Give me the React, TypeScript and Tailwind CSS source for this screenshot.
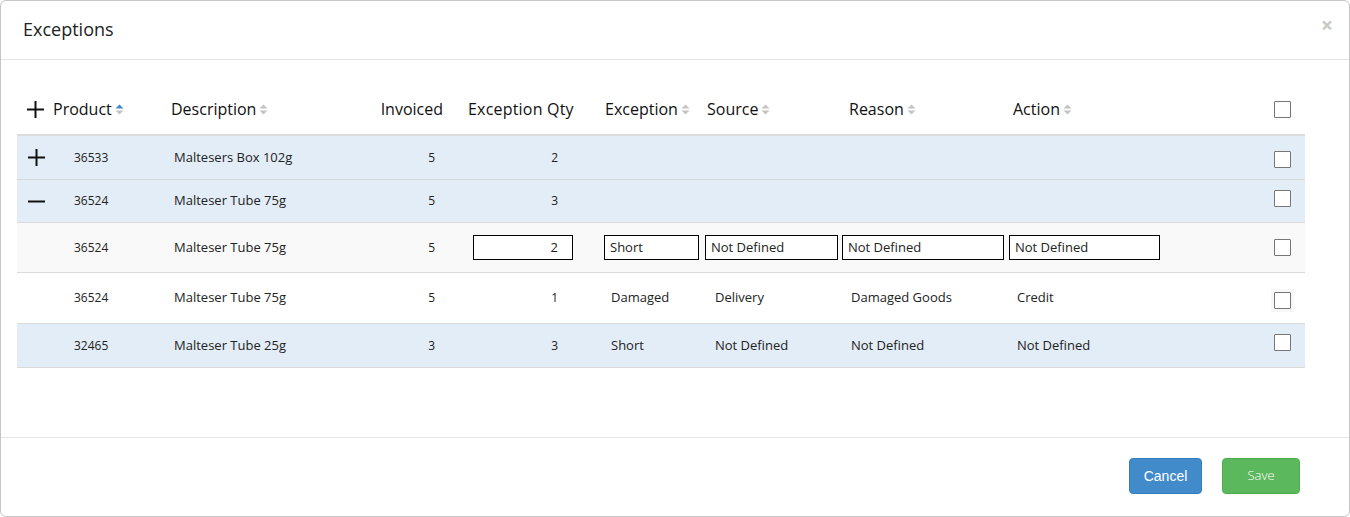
import React from "react";

const font = { fontFamily: '"Open Sans", "Noto Sans", sans-serif' };

function Sort({ active }: { active?: boolean }) {
  return (
    <svg width="9" height="11" viewBox="0 0 9 11" className="ml-[3px] inline-block">
      <path d="M0.5 4.5 L4.5 0.5 L8.5 4.5 Z" fill={active ? "#428bca" : "#c4c4c4"} />
      <path d="M0.5 6.5 L4.5 10.5 L8.5 6.5 Z" fill="#c4c4c4" />
    </svg>
  );
}

function Plus() {
  return (
    <svg width="19" height="19" viewBox="0 0 19 19">
      <path d="M9.5 1 V18 M1 9.5 H18" stroke="#111" strokeWidth="2" />
    </svg>
  );
}
function Minus() {
  return (
    <svg width="19" height="19" viewBox="0 0 19 19">
      <path d="M1 9.5 H18" stroke="#111" strokeWidth="2" />
    </svg>
  );
}

function Check({ shade }: { shade?: boolean }) {
  return (
    <div className={shade ? "w-fit p-[3px] -m-[3px] bg-[#f7f7f7]" : "w-fit"}>
      <div className="w-[17px] h-[17px] border border-[#767676] bg-white rounded-[1px]" />
    </div>
  );
}

type Row = {
  icon?: "plus" | "minus";
  bg: string;
  h: string;
  cb: string;
  prod: string;
  desc: string;
  inv: string;
  qty: string;
  exc?: string;
  src?: string;
  rea?: string;
  act?: string;
  edit?: boolean;
  shade?: boolean;
};

const rows: Row[] = [
  { icon: "plus", bg: "bg-[#e3edf7]", h: "h-[44px]", cb: "translate-y-[2px]", prod: "36533", desc: "Maltesers Box 102g", inv: "5", qty: "2" },
  { icon: "minus", bg: "bg-[#e3edf7]", h: "h-[43px]", cb: "-translate-y-[3px]", prod: "36524", desc: "Malteser Tube 75g", inv: "5", qty: "3" },
  { bg: "bg-[#f9f9f9]", h: "h-[50px]", cb: "", prod: "36524", desc: "Malteser Tube 75g", inv: "5", qty: "2", exc: "Short", src: "Not Defined", rea: "Not Defined", act: "Not Defined", edit: true },
  { bg: "bg-white", h: "h-[51px]", cb: "translate-y-[2px]", prod: "36524", desc: "Malteser Tube 75g", inv: "5", qty: "1", exc: "Damaged", src: "Delivery", rea: "Damaged Goods", act: "Credit", shade: true },
  { bg: "bg-[#e3edf7]", h: "h-[44px]", cb: "-translate-y-[3px]", prod: "32465", desc: "Malteser Tube 25g", inv: "3", qty: "3", exc: "Short", src: "Not Defined", rea: "Not Defined", act: "Not Defined" },
];

function Input({ value, w, right }: { value: string; w: string; right?: boolean }) {
  return (
    <div className={`${w} h-[25px] border border-black bg-white flex items-center ${right ? "justify-end pr-[14px]" : "pl-[5px]"} text-[13px] text-[#222]`}>
      {value}
    </div>
  );
}

export default function App() {
  return (
    <div className="w-[1350px] h-[517px] bg-white" style={font}>
      <div className="w-[1350px] h-[517px] border border-[#c6c6c6] rounded-[6px] flex flex-col">
        <div className="h-[59px] border-b border-[#e5e5e5] flex items-center justify-between pl-[22px] pr-[16px] shrink-0">
          <div className="text-[18px] text-[#222] -mt-[1px]">Exceptions</div>
          <div className="text-[21px] text-[#c8c8c8] font-bold leading-none -mt-[10px]">×</div>
        </div>
        <div className="flex-1 pt-[28px] pl-[16px]">
          <div className="w-[1288px]">
            <div className="h-[48px] flex items-center border-b-2 border-[#dddddd] text-[16px] text-[#111] pb-[4px]">
              <div className="w-[151px] flex items-center pl-[9px]">
                <Plus />
                <span className="ml-[8px]">Product</span>
                <Sort active />
              </div>
              <div className="w-[192px] pl-[3px] flex items-center">Description<Sort /></div>
              <div className="w-[88px] text-right pr-[5px]">Invoiced</div>
              <div className="w-[142px] pl-[20px] tracking-[0.2px]">Exception Qty</div>
              <div className="w-[112px] pl-[15px] flex items-center">Exception<Sort /></div>
              <div className="w-[138px] pl-[5px] flex items-center">Source<Sort /></div>
              <div className="w-[166px] pl-[9px] flex items-center">Reason<Sort /></div>
              <div className="w-[254px] pl-[7px] flex items-center">Action<Sort /></div>
              <div className="w-[45px] pl-[14px]"><Check /></div>
            </div>
            {rows.map((r, i) => (
              <div key={i} className={`${r.h} ${r.bg} flex items-center border-b border-[#dadada] text-[13px] text-[#222]`}>
                <div className="w-[47px] pl-[10px] flex items-center">
                  {r.icon === "plus" && <Plus />}
                  {r.icon === "minus" && <Minus />}
                </div>
                <div className="w-[104px] pl-[10px] text-[12px]">{r.prod}</div>
                <div className="w-[192px] pl-[6px]">{r.desc}</div>
                <div className="w-[88px] text-right pr-[13px] text-[12px]">{r.inv}</div>
                <div className="w-[142px] flex">
                  {r.edit ? (
                    <div className="pl-[25px]"><Input value={r.qty} w="w-[100px]" right /></div>
                  ) : (
                    <div className="w-[110px] text-right text-[12px]">{r.qty}</div>
                  )}
                </div>
                <div className="w-[112px]">
                  {r.edit ? <div className="pl-[14px]"><Input value={r.exc!} w="w-[95px]" /></div> : <div className="pl-[21px]">{r.exc}</div>}
                </div>
                <div className="w-[138px]">
                  {r.edit ? <div className="pl-[3px]"><Input value={r.src!} w="w-[133px]" /></div> : <div className="pl-[13px]">{r.src}</div>}
                </div>
                <div className="w-[166px]">
                  {r.edit ? <div className="pl-[2px]"><Input value={r.rea!} w="w-[162px]" /></div> : <div className="pl-[11px]">{r.rea}</div>}
                </div>
                <div className="w-[254px]">
                  {r.edit ? <div className="pl-[3px]"><Input value={r.act!} w="w-[151px]" /></div> : <div className="pl-[11px]">{r.act}</div>}
                </div>
                <div className={`w-[45px] pl-[14px] ${r.cb}`}><Check shade={r.shade} /></div>
              </div>
            ))}
          </div>
        </div>
        <div className="h-[79px] border-t border-[#e5e5e5] flex items-center justify-end pr-[49px] gap-[20px] shrink-0 pb-[2px]">
          <button className="w-[73px] h-[36px] rounded-[4px] bg-[#428bca] border border-[#357ebd] text-white text-[14px]" style={{ fontFamily: '"Liberation Sans", Arial, sans-serif' }}>Cancel</button>
          <button className="w-[78px] h-[36px] rounded-[4px] bg-[#5cb85c] border border-[#4cae4c] text-white text-[13px] font-light">Save</button>
        </div>
      </div>
    </div>
  );
}
